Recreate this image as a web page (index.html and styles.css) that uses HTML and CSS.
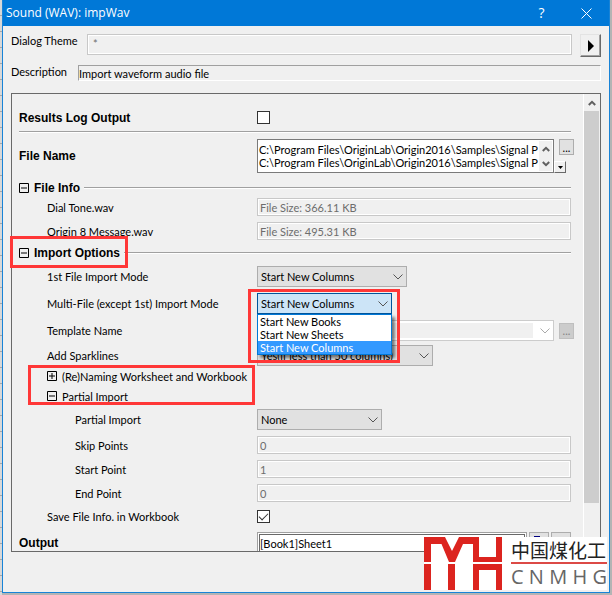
FILE: index.html
```
<!DOCTYPE html>
<html lang="en">
<head>
<meta charset="UTF-8">
<meta name="viewport" content="width=device-width, initial-scale=1.0">
<title>Sound (WAV): impWav</title>
<link rel="stylesheet" href="styles.css">
</head>
<body>
<main class="dialog">
  <header class="titlebar">
    <h1>Sound (WAV): impWav</h1>
    <button type="button" class="title-btn" aria-label="Help">?</button>
    <button type="button" class="title-btn" aria-label="Close">
      <svg width="11" height="11" viewBox="0 0 11 11"><path d="M.5.5l10 10M10.5.5l-10 10" stroke="#fff" fill="none"/></svg>
    </button>
  </header>

  <form class="dialog-body">
    <div class="theme-row">
      <label for="theme">Dialog Theme</label>
      <input type="text" id="theme" class="field theme" value="*" readonly>
      <button type="button" class="theme-btn" aria-label="Theme menu">
        <svg width="6" height="12" viewBox="0 0 6 12"><path d="M0 0l6 6-6 6z"/></svg>
      </button>
    </div>
    <div class="desc-row">
      <label for="desc">Description</label>
      <input type="text" id="desc" class="desc" value="Import waveform audio file" readonly>
    </div>

    <div class="panel">
      <div class="rows">
        <div class="row ruled">
          <label class="strong" for="log">Results Log Output</label>
          <input type="checkbox" id="log" class="check">
        </div>
        <div class="row files">
          <label class="strong" for="files">File Name</label>
          <div class="control">
            <div class="filebox">
              <textarea id="files" wrap="off">C:\Program Files\OriginLab\Origin2016\Samples\Signal P
C:\Program Files\OriginLab\Origin2016\Samples\Signal P</textarea>
              <div class="spin">
                <svg width="8" height="6" viewBox="0 0 8 6"><path d="M.8 5L4 1.8 7.200 5"/></svg>
                <svg width="8" height="6" viewBox="0 0 8 6"><path d="M.8 1L4 4.200 7.200 1"/></svg>
              </div>
            </div>
            <div class="file-btns">
              <button type="button" class="dots">...</button>
              <button type="button" class="drop" aria-label="Recent files">
                <svg width="5" height="3" viewBox="0 0 5 3"><path d="M0 0h5L2.500 3z"/></svg>
              </button>
            </div>
          </div>
        </div>

        <div class="heading info">
          <button type="button" class="tree" aria-label="Collapse">
            <svg width="10" height="10" viewBox="0 0 10 10"><path d="M.5.5h9v9h-9zM2 5h6"/></svg>
          </button>
          <h2>File Info</h2><hr>
        </div>
        <div class="row">
          <label class="in1" for="dial">Dial Tone.wav</label>
          <input type="text" id="dial" class="field" value="File Size: 366.11 KB" disabled>
        </div>
        <div class="row">
          <label class="in1" for="message">Origin 8 Message.wav</label>
          <input type="text" id="message" class="field" value="File Size: 495.31 KB" disabled>
        </div>

        <div class="heading">
          <button type="button" class="tree" aria-label="Collapse">
            <svg width="10" height="10" viewBox="0 0 10 10"><path d="M.5.5h9v9h-9zM2 5h6"/></svg>
          </button>
          <h2>Import Options</h2><hr>
        </div>
        <div class="row tall">
          <label class="in1" for="first">1st File Import Mode</label>
          <div class="combo w150">
            <select id="first"><option>Start New Columns</option></select>
            <svg width="10" height="6" viewBox="0 0 10 6"><path d="M.5.5L5 5 9.500.5"/></svg>
          </div>
        </div>
        <div class="row tall">
          <label class="in1" for="multi">Multi-File (except 1st) Import Mode</label>
          <div class="combo w135 open">
            <select id="multi">
              <option>Start New Books</option>
              <option>Start New Sheets</option>
              <option selected>Start New Columns</option>
            </select>
            <svg width="10" height="6" viewBox="0 0 10 6"><path d="M.5.5L5 5 9.500.5"/></svg>
            <ul class="list" role="listbox">
              <li role="option">Start New Books</li>
              <li role="option">Start New Sheets</li>
              <li role="option" class="selected" aria-selected="true">Start New Columns</li>
            </ul>
          </div>
        </div>
        <div class="row tall">
          <label class="in1" for="template">Template Name</label>
          <div class="control template">
            <div class="combo w297 off">
              <select id="template" disabled><option></option></select>
              <svg width="10" height="6" viewBox="0 0 10 6"><path d="M.5.5L5 5 9.500.5"/></svg>
            </div>
            <button type="button" class="dots" disabled>...</button>
          </div>
        </div>
        <div class="row spark">
          <label class="in1" for="spark">Add Sparklines</label>
          <div class="combo w176">
            <select id="spark"><option>Yes(if less than 50 columns)</option></select>
            <svg width="10" height="6" viewBox="0 0 10 6"><path d="M.5.5L5 5 9.500.5"/></svg>
          </div>
        </div>

        <div class="heading sub">
          <button type="button" class="tree" aria-label="Expand">
            <svg width="10" height="10" viewBox="0 0 10 10"><path d="M.5.5h9v9h-9zM2 5h6M5 2v6"/></svg>
          </button>
          <h3>(Re)Naming Worksheet and Workbook</h3>
        </div>
        <div class="heading sub">
          <button type="button" class="tree" aria-label="Collapse">
            <svg width="10" height="10" viewBox="0 0 10 10"><path d="M.5.5h9v9h-9zM2 5h6"/></svg>
          </button>
          <h3>Partial Import</h3>
        </div>
        <div class="row tall">
          <label class="in2" for="partial">Partial Import</label>
          <div class="combo w125">
            <select id="partial"><option>None</option></select>
            <svg width="10" height="6" viewBox="0 0 10 6"><path d="M.5.5L5 5 9.500.5"/></svg>
          </div>
        </div>
        <div class="row">
          <label class="in2" for="skip">Skip Points</label>
          <input type="text" id="skip" class="field" value="0" disabled>
        </div>
        <div class="row">
          <label class="in2" for="start">Start Point</label>
          <input type="text" id="start" class="field" value="1" disabled>
        </div>
        <div class="row">
          <label class="in2" for="end">End Point</label>
          <input type="text" id="end" class="field" value="0" disabled>
        </div>
        <div class="row save">
          <label class="in1" for="save">Save File Info. in Workbook</label>
          <input type="checkbox" id="save" class="check" checked>
        </div>
        <div class="row output">
          <label class="strong" for="output">Output</label>
          <div class="control">
            <input type="text" id="output" class="out-field" value="[Book1]Sheet1">
            <button type="button" class="out-btn" aria-label="Select range">
              <svg width="12" height="12" viewBox="0 0 12 12"><path d="M1 2h6v2h4v7H1z" fill="#fff" stroke="#000080"/><path d="M1 0h6v3H1z" fill="#000080"/></svg>
            </button>
            <button type="button" class="out-btn" aria-label="Output menu"></button>
          </div>
        </div>
      </div>
      <div class="scrollbar">
        <svg width="8" height="6" viewBox="0 0 8 6"><path d="M.8 5L4 1.800 7.200 5"/></svg>
        <div class="thumb"></div>
      </div>
    </div>
  </form>

  <!-- red marks over the options to look at -->
  <div class="mark mark-options"></div>
  <div class="mark mark-mode"></div>
  <div class="mark mark-partial"></div>

  <div class="logo">
    <svg width="79" height="53" viewBox="0 0 79 53">
      <g fill="#dc241f">
        <path d="M0 0h21l7 14 7-14h20v20h17V0h6v25H49V7H39l-8 18h-6L17.500 7H7v18H0z"/>
        <path d="M0 27h7v26H0zM24 27h7v26h-7zM49 27h29v26h-6V33H55v20h-6z"/>
      </g>
    </svg>
    <div class="logo-text">
      <span class="logo-cn" lang="zh">中国煤化工</span>
      <span class="logo-en"><i>C</i><i>N</i><i>M</i><i>H</i><i>G</i></span>
    </div>
  </div>
</main>
</body>
</html>
```

FILE: styles.css
```
* {
  box-sizing: border-box;
}

body {
  margin: 0;
  height: 100vh;
  padding: 0 2px 2px;
  background:
    repeating-linear-gradient(#d8d8d8 0 15px, #a8a8a8 15px 16px) left / 2px 100% no-repeat,
    #b4b4b4;
  font: 11px/13px Lato, sans-serif;
  color: #000;
}

input, select, textarea, button {
  font: inherit;
  color: inherit;
  margin: 0;
  padding: 0;
  border-radius: 0;
}

svg {
  display: block;
}

.dialog {
  position: relative;
  display: flex;
  flex-direction: column;
  height: 100%;
  border: 1px solid #1883d7;
  border-top: 0;
  background: #f0f0f0;
}

.titlebar {
  display: flex;
  align-items: center;
  height: 26px;
  padding: 0 0 0 3px;
  background: #0078d7;
  color: #fff;
}
.titlebar h1 {
  flex: 1;
  margin: 0;
  font: 12px/16px "Open Sans", sans-serif;
}
.title-btn {
  display: flex;
  align-items: center;
  justify-content: center;
  width: 45px;
  height: 26px;
  border: 0;
  background: none;
  font: 14px/16px "Open Sans", sans-serif;
}

.dialog-body {
  flex: 1;
  min-height: 0;
  display: flex;
  flex-direction: column;
  padding: 8px 8px 40px;
}

.theme-row {
  display: flex;
  height: 31px;
}
.theme-row label {
  width: 76px;
}
.field {
  width: 100%;
  height: 18px;
  padding: 0 2px;
  border: 1px solid #c8c8c8;
  outline: 1px solid #fff;
  outline-offset: -2px;
  background: #f0f0f0;
}
.field:disabled {
  color: #6d6d6d;
}
.field.theme {
  flex: 1;
  height: 21px;
  padding: 0 5px 2px;
  color: #6d6d6d;
}
.theme-btn {
  display: flex;
  align-items: center;
  justify-content: center;
  width: 21px;
  height: 23px;
  margin-left: 8px;
  border: 1px solid;
  border-color: #e3e3e3 #696969 #696969 #e3e3e3;
  box-shadow: inset -1px -1px #a0a0a0;
  background: #f0f0f0;
}

.desc-row {
  display: flex;
  height: 28px;
}
.desc-row label {
  width: 67px;
}
.desc {
  flex: 1;
  height: 16px;
  border: 1px solid;
  border-color: #a0a0a0 #fff #fff #a0a0a0;
  background: #f0f0f0;
}

.panel {
  flex: 1;
  min-height: 0;
  display: flex;
  overflow: hidden;
  border: 1px solid #696969;
}
.rows {
  flex: 1;
  min-width: 0;
  padding: 10px 12px 0 7px;
}

.row {
  display: grid;
  grid-template-columns: 238px 1fr;
  align-items: center;
  height: 24px;
}
.row.ruled {
  height: 28px;
  border-bottom: 1px solid #a0a0a0;
  box-shadow: 0 1px #fff;
}
.row.files {
  height: 48px;
}
.row.tall {
  height: 27px;
}
.row.spark, .row.save {
  height: 22px;
}
.row.output {
  height: 32px;
}
.strong, h2 {
  font: bold 12px/14px "Liberation Sans", sans-serif;
}
.in1 {
  padding-left: 28px;
}
.in2 {
  padding-left: 56px;
}

.heading {
  display: flex;
  align-items: center;
  height: 20px;
}
.heading.info {
  height: 15px;
}
.heading.sub {
  height: 20px;
  padding-left: 28px;
}
.heading h2, .heading h3 {
  margin: 0 4px 0 5px;
}
.heading h3 {
  font: inherit;
}
.heading hr {
  flex: 1;
  margin: 0;
  border: 0;
  border-top: 1px solid #a0a0a0;
  border-bottom: 1px solid #fff;
}
.tree {
  border: 0;
  background: none;
}
.tree path {
  fill: none;
  stroke: #000;
}

.check {
  appearance: none;
  width: 13px;
  height: 13px;
  border: 1px solid #333;
  background: #fff;
}
.check:checked::after {
  content: "";
  display: block;
  width: 8px;
  height: 4px;
  margin: 2px 0 0 1px;
  border: solid #333;
  border-width: 0 0 1px 1px;
  transform: rotate(-45deg);
}

.control {
  display: flex;
}
.filebox {
  display: flex;
  width: 297px;
  height: 34px;
  border: 1px solid #7a7a7a;
  background: #fff;
}
.filebox textarea {
  flex: 1;
  min-width: 0;
  padding: 3px 0 3px 1px;
  border: 0;
  resize: none;
  overflow: hidden;
  background: #fff;
}
.spin {
  display: flex;
  flex-direction: column;
  justify-content: space-around;
  align-items: center;
  width: 13px;
  margin: 1px 1px 1px 0;
  background: #f0f0f0;
}
.spin path, .scrollbar path {
  fill: none;
  stroke: #606060;
  stroke-width: 2;
}
.file-btns {
  display: flex;
  flex-direction: column;
  justify-content: space-between;
  width: 20px;
}
.dots {
  width: 15px;
  height: 16px;
  margin-left: 5px;
  border: 1px solid #adadad;
  background: #e1e1e1;
}
.dots:disabled {
  border-color: #bfbfbf;
  background: #ccc;
  color: #838383;
}
.drop {
  display: flex;
  align-items: center;
  justify-content: center;
  width: 12px;
  height: 12px;
  border: 1px solid;
  border-color: #fff #696969 #696969 #fff;
  background: #f0f0f0;
}
.template {
  align-items: center;
}

.combo {
  position: relative;
  height: 21px;
}
.combo select {
  display: block;
  appearance: none;
  width: 100%;
  height: 100%;
  padding: 0 3px;
  border: 1px solid #adadad;
  background: #e1e1e1;
}
.combo > svg {
  position: absolute;
  right: 4px;
  top: 8px;
}
.combo > svg path {
  fill: none;
  stroke: #555;
}
.combo.open select {
  border-color: #00559b;
  background: #cce4f7;
}
.combo.off select {
  border-color: #ccc;
  background: linear-gradient(#f0f0f0, #f0f0f0) 2px 2px / calc(100% - 22px) 15px no-repeat #fff;
  opacity: 1;
}
.combo.off path {
  stroke: #aaa;
}
.w125 { width: 125px; }
.w135 { width: 135px; }
.w150 { width: 150px; }
.w176 { width: 176px; }
.w297 { width: 297px; }

.list {
  position: absolute;
  z-index: 1;
  top: 21px;
  left: 0;
  width: 100%;
  margin: 0;
  padding: 0;
  border: 1px solid #0078d7;
  background: #fff;
  box-shadow: 3px 3px 3px rgba(0, 0, 0, .5);
  list-style: none;
}
.list li {
  padding: 0 2px;
}
.list .selected {
  background: #39f;
  color: #fff;
}

.out-field {
  width: 270px;
  height: 22px;
  padding: 0 2px;
  border: 1px solid #a0a0a0;
  outline: 1px solid #696969;
  outline-offset: -3px;
  background: #fff;
}
.out-btn {
  width: 20px;
  height: 20px;
  margin-left: 2px;
  padding: 2px 3px;
  border: 1px solid #adadad;
  background: #e1e1e1;
}

.scrollbar {
  display: flex;
  flex-direction: column;
  align-items: center;
  flex-shrink: 0;
  width: 17px;
  padding: 6px 1px 48px 0;
  border-left: 1px solid #fff;
}
.thumb {
  flex: 1;
  width: 100%;
  margin-top: 5px;
  background: #cdcdcd;
}

.mark {
  position: absolute;
  z-index: 2;
  border: 3px solid #ff3737;
  pointer-events: none;
}
.mark-options {
  left: 7px;
  top: 236px;
  width: 118px;
  height: 32px;
}
.mark-mode {
  left: 245px;
  top: 289px;
  width: 152px;
  height: 74px;
}
.mark-partial {
  left: 25px;
  top: 365px;
  width: 227px;
  height: 40px;
}

.logo {
  position: absolute;
  z-index: 3;
  right: 2px;
  bottom: 2px;
  display: flex;
  width: 183px;
  height: 53px;
  overflow: hidden;
  background: #fff;
}
.logo-text {
  flex: 1;
  margin-left: 8px;
}
.logo-cn {
  display: block;
  height: 27px;
  border-bottom: 2px solid #dc4a46;
  font: 19px/25px "Noto Sans CJK SC", sans-serif;
  color: #222;
  white-space: nowrap;
}
.logo-en {
  display: flex;
  justify-content: space-between;
  font: 20px/26px "Open Sans", sans-serif;
  color: #666;
}
.logo-en i {
  font-style: normal;
}
```
